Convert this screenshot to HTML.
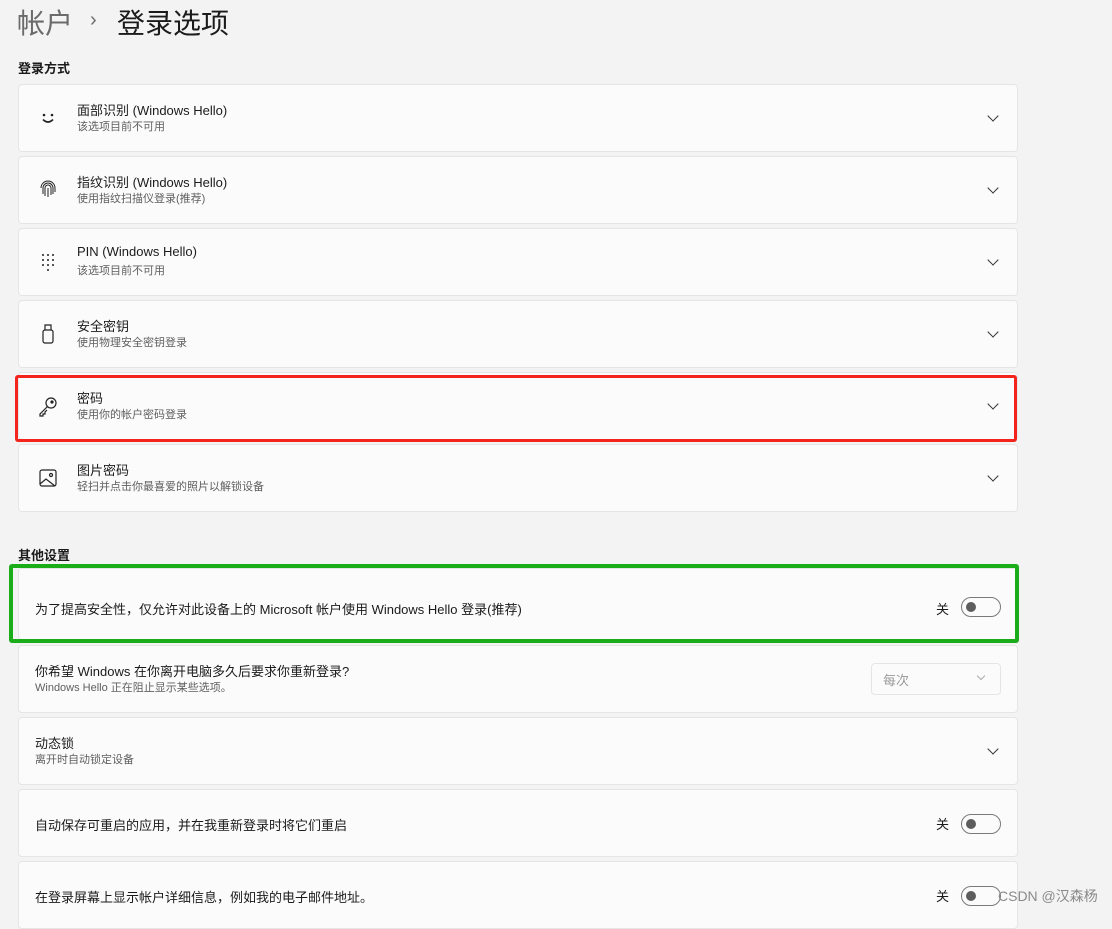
<!DOCTYPE html><html><head><meta charset="utf-8"><style>
body{margin:0;width:1112px;height:914px;overflow:hidden;background:#f3f3f3;font-family:"Liberation Sans","Noto Sans CJK SC",sans-serif;color:#1b1b1b;position:relative}
.a{position:absolute}
.card{position:absolute;left:18px;width:998px;height:66px;background:#fbfbfb;border:1px solid #e5e5e5;border-radius:4px}
.t{position:absolute;left:58px;top:15px;font-size:13px}
.s{position:absolute;left:58px;top:33px;font-size:11px;color:#5f5f5f}
.t2{left:16px}.s2{left:16px}
.chev{position:absolute;right:20px;top:27px;width:7px;height:7px;border-right:1.3px solid #333;border-bottom:1.3px solid #333;transform:rotate(45deg)}
.ic{position:absolute;left:18px;top:22px;width:22px;height:22px}
.tog{position:absolute;right:16px;top:24px;border:1px solid #7a7a7a;border-radius:10px;box-sizing:border-box;width:40px;height:20px}
.tog:after{content:"";position:absolute;left:4px;top:4px;width:10px;height:10px;border-radius:50%;background:#5d5d5d}
.off{position:absolute;right:68px;top:24px;font-size:13px}
</style></head><body>
<div class="a" style="left:17px;top:2px;font-size:28px;color:#6b6b6b">帐户</div>
<div class="a" style="left:90px;top:9px;font-size:20px;color:#6b6b6b">›</div>
<div class="a" style="left:117px;top:2px;font-size:28px">登录选项</div>
<div class="a" style="left:18px;top:58px;font-size:13px;font-weight:bold">登录方式</div>

<div class="card" style="top:84px"><svg class="ic" viewBox="0 0 22 22"><circle cx="7" cy="8" r="1.3" fill="#222"/><circle cx="15" cy="8" r="1.3" fill="#222"/><path d="M6 12.5q5 5 10 0" stroke="#222" stroke-width="1.6" fill="none"/></svg><div class="t">面部识别 (Windows Hello)</div><div class="s">该选项目前不可用</div><div class="chev"></div></div>
<div class="card" style="top:156px"><svg class="ic" viewBox="0 0 22 22" fill="none" stroke="#222" stroke-width="1"><path d="M4 9a7 7 0 0 1 14 0v4M6 15V9a5 5 0 0 1 10 0v6M8 17V9a3 3 0 0 1 6 0v7M11 9v9"/></svg><div class="t">指纹识别 (Windows Hello)</div><div class="s">使用指纹扫描仪登录(推荐)</div><div class="chev"></div></div>
<div class="card" style="top:228px"><svg class="ic" viewBox="0 0 22 22" fill="#222"><circle cx="6" cy="4" r="1"/><circle cx="11" cy="4" r="1"/><circle cx="16" cy="4" r="1"/><circle cx="6" cy="9" r="1"/><circle cx="11" cy="9" r="1"/><circle cx="16" cy="9" r="1"/><circle cx="6" cy="14" r="1"/><circle cx="11" cy="14" r="1"/><circle cx="16" cy="14" r="1"/><circle cx="11" cy="19" r="1"/></svg><div class="t">PIN (Windows Hello)</div><div class="s">该选项目前不可用</div><div class="chev"></div></div>
<div class="card" style="top:300px"><svg class="ic" viewBox="0 0 22 22" fill="none" stroke="#222" stroke-width="1.2"><rect x="6" y="7" width="10" height="13" rx="2"/><path d="M8 7V2h6v5"/></svg><div class="t">安全密钥</div><div class="s">使用物理安全密钥登录</div><div class="chev"></div></div>
<div class="card" style="top:372px"><svg class="ic" viewBox="0 0 22 22" fill="none" stroke="#222" stroke-width="1.2"><circle cx="14" cy="8" r="5"/><circle cx="15" cy="7" r="1" fill="#222"/><path d="M10.5 11.5L3 19v2h3v-2h2v-2l2-2"/></svg><div class="t">密码</div><div class="s">使用你的帐户密码登录</div><div class="chev"></div></div>
<div class="card" style="top:444px"><svg class="ic" viewBox="0 0 22 22" fill="none" stroke="#222" stroke-width="1.2"><rect x="3" y="3" width="16" height="16" rx="2"/><circle cx="14" cy="8" r="1.5"/><path d="M3 17l6-5 9 7"/></svg><div class="t">图片密码</div><div class="s">轻扫并点击你最喜爱的照片以解锁设备</div><div class="chev"></div></div>
<div class="a" style="left:15px;top:375px;width:996px;height:61px;border:3px solid #f4231c;border-radius:3px"></div>

<div class="a" style="left:18px;top:545px;font-size:13px;font-weight:bold">其他设置</div>
<div class="card" style="top:568px;height:70px"><div class="t t2" style="top:30px">为了提高安全性，仅允许对此设备上的 Microsoft 帐户使用 Windows Hello 登录(推荐)</div><div class="off" style="top:30px">关</div><div class="tog" style="top:28px"></div></div>
<div class="a" style="left:9px;top:564px;width:1002px;height:71px;border:4px solid #1aad19;border-radius:3px"></div>
<div class="card" style="top:645px"><div class="t t2">你希望 Windows 在你离开电脑多久后要求你重新登录?</div><div class="s s2">Windows Hello 正在阻止显示某些选项。</div><div class="a" style="right:16px;top:17px;width:128px;height:30px;border:1px solid #e5e5e5;border-radius:4px;background:#fbfbfb;font-size:13px;color:#9a9a9a"><span class="a" style="left:11px;top:6px">每次</span><span class="a" style="right:16px;top:9px;width:5px;height:5px;border-right:1px solid #aaa;border-bottom:1px solid #aaa;transform:rotate(45deg)"></span></div></div>
<div class="card" style="top:717px"><div class="t t2">动态锁</div><div class="s s2">离开时自动锁定设备</div><div class="chev"></div></div>
<div class="card" style="top:789px"><div class="t t2" style="top:25px">自动保存可重启的应用，并在我重新登录时将它们重启</div><div class="off">关</div><div class="tog"></div></div>
<div class="card" style="top:861px"><div class="t t2" style="top:25px">在登录屏幕上显示帐户详细信息，例如我的电子邮件地址。</div><div class="off">关</div><div class="tog"></div></div>
<div class="a" style="left:998px;top:886px;font-size:14px;color:#8a8a8a">CSDN @汉森杨</div>
</body></html>
